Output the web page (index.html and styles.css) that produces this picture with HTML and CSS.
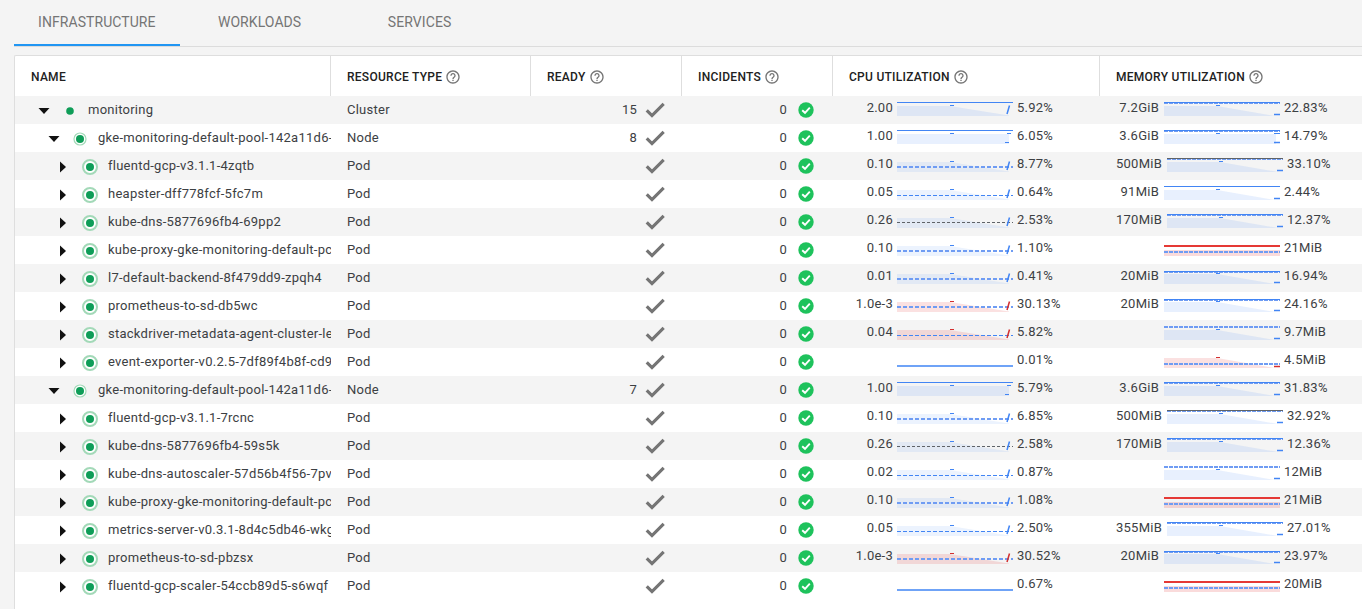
FILE: index.html
```html
<!DOCTYPE html>
<html lang="en">
<head>
    <meta charset="UTF-8">
    <meta name="viewport" content="width=device-width, initial-scale=1.0">
    <title>Kubernetes Monitoring</title>
    <link rel="stylesheet" href="styles.css">
</head>
<body>
    <div class="tabs">
        <div class="tab active">INFRASTRUCTURE</div>
        <div class="tab">WORKLOADS</div>
        <div class="tab">SERVICES</div>
    </div>
    <div class="card">
        <table id="resourceTable">
            <colgroup>
                <col class="col-name">
                <col class="col-type">
                <col class="col-ready">
                <col class="col-incidents">
                <col class="col-cpu">
                <col class="col-memory">
            </colgroup>
            <thead>
                <tr id="headRow"></tr>
            </thead>
            <tbody id="resourceRows"></tbody>
        </table>
    </div>
    <script src="app.js"></script>
</body>
</html>
```

FILE: styles.css
```css
* {
    box-sizing: border-box;
}
html, body {
    height: 100%;
}
body {
    display: flex;
    flex-direction: column;
    margin: 0;
    overflow: hidden;
    background-color: #f4f4f4;
    color: #3c4043;
    font-family: Roboto, "Liberation Sans", sans-serif;
    font-size: 13px;
    letter-spacing: 0.25px;
}
.tabs {
    display: flex;
    flex: none;
    height: 47px;
    margin-left: 14px;
    border-bottom: 1px solid #dcdcdc;
}
.tab {
    min-width: 160px;
    height: 46px;
    padding: 0 24px;
    color: #757575;
    font-size: 14px;
    letter-spacing: 0.07px;
    line-height: 44px;
    text-align: center;
}
.tab.active {
    border-bottom: 2px solid #2196f3;
}
.card {
    flex: 1;
    margin: 8px 0 0 14px;
    background-color: white;
    border: 1px solid #dedede;
    border-width: 1px 0 0 1px;
    border-radius: 2px 0 0 0;
}
table {
    width: 100%;
    table-layout: fixed;
    border-collapse: separate;
    border-spacing: 0;
}
.col-name { width: 316px; }
.col-type { width: 200px; }
.col-ready { width: 151px; }
.col-incidents { width: 151px; }
.col-cpu { width: 267px; }
th {
    height: 40px;
    padding: 2px 0 0 16px;
    border-right: 1px solid #dedede;
    color: #212121;
    font-size: 12px;
    font-weight: 500;
    letter-spacing: 0.27px;
    text-align: left;
    white-space: nowrap;
}
th:last-child {
    border-right: 0;
}
.help {
    display: inline-block;
    width: 16px;
    height: 16px;
    margin-left: 3px;
    fill: #757575;
    vertical-align: -4px;
}
tbody tr {
    height: 28px;
}
tbody tr:nth-child(odd) {
    background-color: #f4f4f4;
}
td {
    height: 28px;
    padding: 0;
    overflow: hidden;
    vertical-align: top;
    white-space: nowrap;
}
.type {
    padding-left: 16px;
    line-height: 27px;
}
.tree {
    display: flex;
    align-items: center;
    height: 28px;
}
.tree span:last-child {
    margin-top: -2px;
}
.depth-0 { padding-left: 19px; }
.depth-1 { padding-left: 29px; }
.depth-2 { padding-left: 39px; }
.twisty {
    display: flex;
    flex: none;
    justify-content: center;
    width: 20px;
    margin-top: 2px;
}
.twisty svg {
    width: 12px;
    height: 12px;
    fill: #111;
}
.status {
    flex: none;
    width: 20px;
    height: 20px;
    margin: 1px 8px 0 6px;
}
.count {
    display: flex;
    align-items: center;
    justify-content: flex-end;
    height: 28px;
}
.count span {
    margin-top: -2px;
}
.ready {
    gap: 6px;
    padding-right: 15px;
}
.incidents {
    gap: 11px;
    padding-right: 19px;
}
.check {
    width: 24px;
    height: 24px;
    fill: #757575;
    stroke: #757575;
    stroke-width: 1.1;
}
.ok {
    width: 16px;
    height: 16px;
}
.metric {
    display: flex;
    align-items: flex-start;
    height: 28px;
    padding-left: 16px;
}
.num {
    flex: none;
    line-height: 24px;
    text-align: right;
}
.cpu .num {
    min-width: 44px;
    margin-right: 4px;
}
.memory .num {
    min-width: 43px;
    margin-right: 5px;
}
.spark {
    flex: none;
    display: block;
    width: 116px;
    height: 28px;
    margin-right: 4px;
}
.pct {
    line-height: 24px;
}
```

FILE: app.js
```js
const helpPath = 'M11 18h2v-2h-2v2zm1-16C6.48 2 2 6.48 2 12s4.48 10 10 10 10-4.48 10-10S17.52 2 12 2zm0 18c-4.41 0-8-3.59-8-8s3.59-8 8-8 8 3.59 8 8-3.59 8-8 8zm0-14c-2.21 0-4 1.79-4 4h2c0-1.1.9-2 2-2s2 .9 2 2c0 2-3 1.75-3 5h2c0-2.25 3-2.5 3-5 0-2.21-1.79-4-4-4z';
const checkPath = 'M9 16.17L4.83 12l-1.42 1.41L9 19 21 7l-1.41-1.41z';
const BLUE = '#4285f4';
const LIGHT = '#6f9cf3';
const RED = '#e53935';
const TICK_RED = '#d32f2f';

const columns = [
    ['NAME', false],
    ['RESOURCE TYPE', true],
    ['READY', true],
    ['INCIDENTS', true],
    ['CPU UTILIZATION', true],
    ['MEMORY UTILIZATION', true]
];

// [depth, name, type, ready, cpu num, cpu pct, cpu spark, mem num, mem pct, mem spark]
const rows = [
    [0, 'monitoring', 'Cluster', '15', '2.00', '5.92%', 'cSolid', '7.2GiB', '22.83%', 'mSolidDash'],
    [1, 'gke-monitoring-default-pool-142a11d6-', 'Node', '8', '1.00', '6.05%', 'cRect', '3.6GiB', '14.79%', 'mRect'],
    [2, 'fluentd-gcp-v3.1.1-4zqtb', 'Pod', '', '0.10', '8.77%', 'cThick', '500MiB', '33.10%', 'mGray'],
    [2, 'heapster-dff778fcf-5fc7m', 'Pod', '', '0.05', '0.64%', 'cThin', '91MiB', '2.44%', 'mSolid'],
    [2, 'kube-dns-5877696fb4-69pp2', 'Pod', '', '0.26', '2.53%', 'cGray', '170MiB', '12.37%', 'mDark'],
    [2, 'kube-proxy-gke-monitoring-default-pc', 'Pod', '', '0.10', '1.10%', 'cThick', '', '21MiB', 'mRed'],
    [2, 'l7-default-backend-8f479dd9-zpqh4', 'Pod', '', '0.01', '0.41%', 'cThick', '20MiB', '16.94%', 'mLow'],
    [2, 'prometheus-to-sd-db5wc', 'Pod', '', '1.0e-3', '30.13%', 'cRedThick', '20MiB', '24.16%', 'mLow'],
    [2, 'stackdriver-metadata-agent-cluster-le', 'Pod', '', '0.04', '5.82%', 'cRedThin', '', '9.7MiB', 'mDash'],
    [2, 'event-exporter-v0.2.5-7df89f4b8f-cd9', 'Pod', '', '', '0.01%', 'flat', '', '4.5MiB', 'mPink'],
    [1, 'gke-monitoring-default-pool-142a11d6-', 'Node', '7', '1.00', '5.79%', 'cRect', '3.6GiB', '31.83%', 'mSolidDash'],
    [2, 'fluentd-gcp-v3.1.1-7rcnc', 'Pod', '', '0.10', '6.85%', 'cThick', '500MiB', '32.92%', 'mGray'],
    [2, 'kube-dns-5877696fb4-59s5k', 'Pod', '', '0.26', '2.58%', 'cGray', '170MiB', '12.36%', 'mDark'],
    [2, 'kube-dns-autoscaler-57d56b4f56-7pv', 'Pod', '', '0.02', '0.87%', 'cThin', '', '12MiB', 'mDash'],
    [2, 'kube-proxy-gke-monitoring-default-pc', 'Pod', '', '0.10', '1.08%', 'cThick', '', '21MiB', 'mRed'],
    [2, 'metrics-server-v0.3.1-8d4c5db46-wkg', 'Pod', '', '0.05', '2.50%', 'cThin', '355MiB', '27.01%', 'mDark'],
    [2, 'prometheus-to-sd-pbzsx', 'Pod', '', '1.0e-3', '30.52%', 'cRedThick', '20MiB', '23.97%', 'mLow'],
    [2, 'fluentd-gcp-scaler-54ccb89d5-s6wqf', 'Pod', '', '', '0.67%', 'flat', '', '20MiB', 'mRed']
];

function line(x1, y1, x2, y2, color, width, dash) {
    const dashAttr = dash ? ` stroke-dasharray="${dash}"` : '';
    return `<line x1="${x1}" y1="${y1}" x2="${x2}" y2="${y2}" stroke="${color}" stroke-width="${width}"${dashAttr}/>`;
}

function fill(points, color, opacity) {
    return `<polygon points="${points}" fill="${color}" fill-opacity="${opacity}"/>`;
}

const SLOPE = '0,10 53,10 112,19.5 112,20 0,20';
const RECT = '0,10 112,10 112,20 0,20';
const MEM_SLOPE = '0,10 53,10 111,20 0,20';

function cpuMarks(color) {
    return line(53, 9.5, 57, 9.5, color, 1) + line(110, 18, 112.5, 9.5, color, 1.5);
}

function memMarks(color, y) {
    return line(52, y, 56, y, color, 1) + line(110, 18.5, 116, 18.5, color, 1.5);
}

const sparks = {
    cSolid: () => fill(SLOPE, BLUE, 0.12) + line(0, 6.5, 116, 6.5, BLUE, 1) + cpuMarks(BLUE),
    cRect: () => fill(RECT, BLUE, 0.12) + line(0, 6.5, 116, 6.5, BLUE, 1) + line(53, 9.5, 57, 9.5, BLUE, 1) + line(110, 9.5, 114, 9.5, BLUE, 1) + line(108, 18.5, 112, 18.5, BLUE, 1),
    cThick: () => fill(SLOPE, BLUE, 0.1) + line(0, 15, 116, 15, LIGHT, 2, '4 2') + cpuMarks(BLUE),
    cThin: () => fill(SLOPE, BLUE, 0.1) + line(0, 15.5, 116, 15.5, BLUE, 1, '4 2') + cpuMarks(BLUE),
    cGray: () => fill(SLOPE, BLUE, 0.1) + line(0, 14.5, 116, 14.5, '#5f6368', 1, '3 2') + cpuMarks(BLUE),
    cRedThick: () => fill(SLOPE, RED, 0.15) + line(0, 15, 116, 15, LIGHT, 2, '4 2') + cpuMarks(TICK_RED),
    cRedThin: () => fill(SLOPE, RED, 0.15) + line(0, 15.5, 116, 15.5, BLUE, 1, '4 2') + cpuMarks(TICK_RED),
    flat: () => line(0, 18, 116, 18, '#6fa3f7', 2),
    mSolid: () => fill(MEM_SLOPE, BLUE, 0.12) + line(0, 6.5, 116, 6.5, BLUE, 1) + memMarks(BLUE, 9.5),
    mSolidDash: () => fill(MEM_SLOPE, BLUE, 0.12) + line(0, 6.5, 116, 6.5, BLUE, 1) + line(0, 7.5, 116, 7.5, LIGHT, 1, '4 1') + memMarks(BLUE, 9.5),
    mRect: () => fill(RECT, BLUE, 0.12) + line(0, 6.5, 116, 6.5, BLUE, 1) + line(0, 7.5, 116, 7.5, LIGHT, 1, '4 1') + line(52, 9.5, 56, 9.5, BLUE, 1) + line(110, 9.5, 116, 9.5, BLUE, 1) + line(110, 18.5, 116, 18.5, BLUE, 1.5),
    mGray: () => fill(MEM_SLOPE, BLUE, 0.12) + line(0, 6.5, 116, 6.5, '#5f6368', 1) + line(0, 7.5, 116, 7.5, LIGHT, 1, '4 1') + memMarks(BLUE, 9.5),
    mDark: () => fill(MEM_SLOPE, BLUE, 0.12) + line(0, 6.5, 116, 6.5, BLUE, 1) + line(0, 7.5, 116, 7.5, LIGHT, 1, '4 1') + memMarks(BLUE, 9.5),
    mDash: () => fill(MEM_SLOPE, BLUE, 0.12) + line(0, 7, 116, 7, LIGHT, 2, '4 1') + memMarks(BLUE, 9.5),
    mLow: () => fill(MEM_SLOPE, BLUE, 0.12) + line(0, 7.5, 116, 7.5, BLUE, 1) + line(0, 8.5, 116, 8.5, LIGHT, 1, '4 1') + memMarks(BLUE, 9.5),
    mRed: () => fill('0,14 116,14 116,20 0,20', RED, 0.18) + line(0, 10, 116, 10, RED, 2) + line(0, 16, 116, 16, LIGHT, 2, '4 1'),
    mPink: () => fill(MEM_SLOPE, RED, 0.15) + line(0, 16, 116, 16, LIGHT, 2, '4 1') + memMarks(TICK_RED, 9.5)
};

function statusIcon(depth) {
    if (depth === 0) {
        return '<circle cx="10" cy="10" r="3.8" fill="#0f9d58"/>';
    }
    const ringRadius = depth === 1 ? 6 : 7;
    const ringWidth = depth === 1 ? 1.2 : 2;
    return `<circle cx="10" cy="10" r="${ringRadius}" fill="white" stroke="#a3d9b8" stroke-width="${ringWidth}"/><circle cx="10" cy="10" r="4" fill="#0f9d58"/>`;
}

function twisty(depth) {
    const points = depth === 2 ? '2,0.5 8,6 2,11.5' : '0.5,3 11.5,3 6,9';
    return `<span class="twisty"><svg viewBox="0 0 12 12"><polygon points="${points}"/></svg></span>`;
}

function metric(kind, num, pct, spark) {
    return `<td class="${kind}"><div class="metric"><span class="num">${num}</span><svg class="spark" viewBox="0 0 116 28">${sparks[spark]()}</svg><span class="pct">${pct}</span></div></td>`;
}

document.getElementById('headRow').innerHTML = columns.map(([label, help]) => {
    const icon = help ? `<svg class="help" viewBox="0 0 24 24"><path d="${helpPath}"/></svg>` : '';
    return `<th>${label}${icon}</th>`;
}).join('');

document.getElementById('resourceRows').innerHTML = rows.map(row => {
    const [depth, name, type, ready, cpuNum, cpuPct, cpuSpark, memNum, memPct, memSpark] = row;
    return `
        <tr>
            <td><div class="tree depth-${depth}">${twisty(depth)}<svg class="status" viewBox="0 0 20 20">${statusIcon(depth)}</svg><span>${name}</span></div></td>
            <td class="type">${type}</td>
            <td><div class="count ready"><span>${ready}</span><svg class="check" viewBox="0 0 24 24"><path d="${checkPath}"/></svg></div></td>
            <td><div class="count incidents"><span>0</span><svg class="ok" viewBox="0 0 16 16"><circle cx="8" cy="8" r="7.7" fill="#1ec25c"/><polyline points="4.2,8.2 7,10.8 11.8,5.6" fill="none" stroke="white" stroke-width="1.9"/></svg></div></td>
            ${metric('cpu', cpuNum, cpuPct, cpuSpark)}
            ${metric('memory', memNum, memPct, memSpark)}
        </tr>`;
}).join('');
```
